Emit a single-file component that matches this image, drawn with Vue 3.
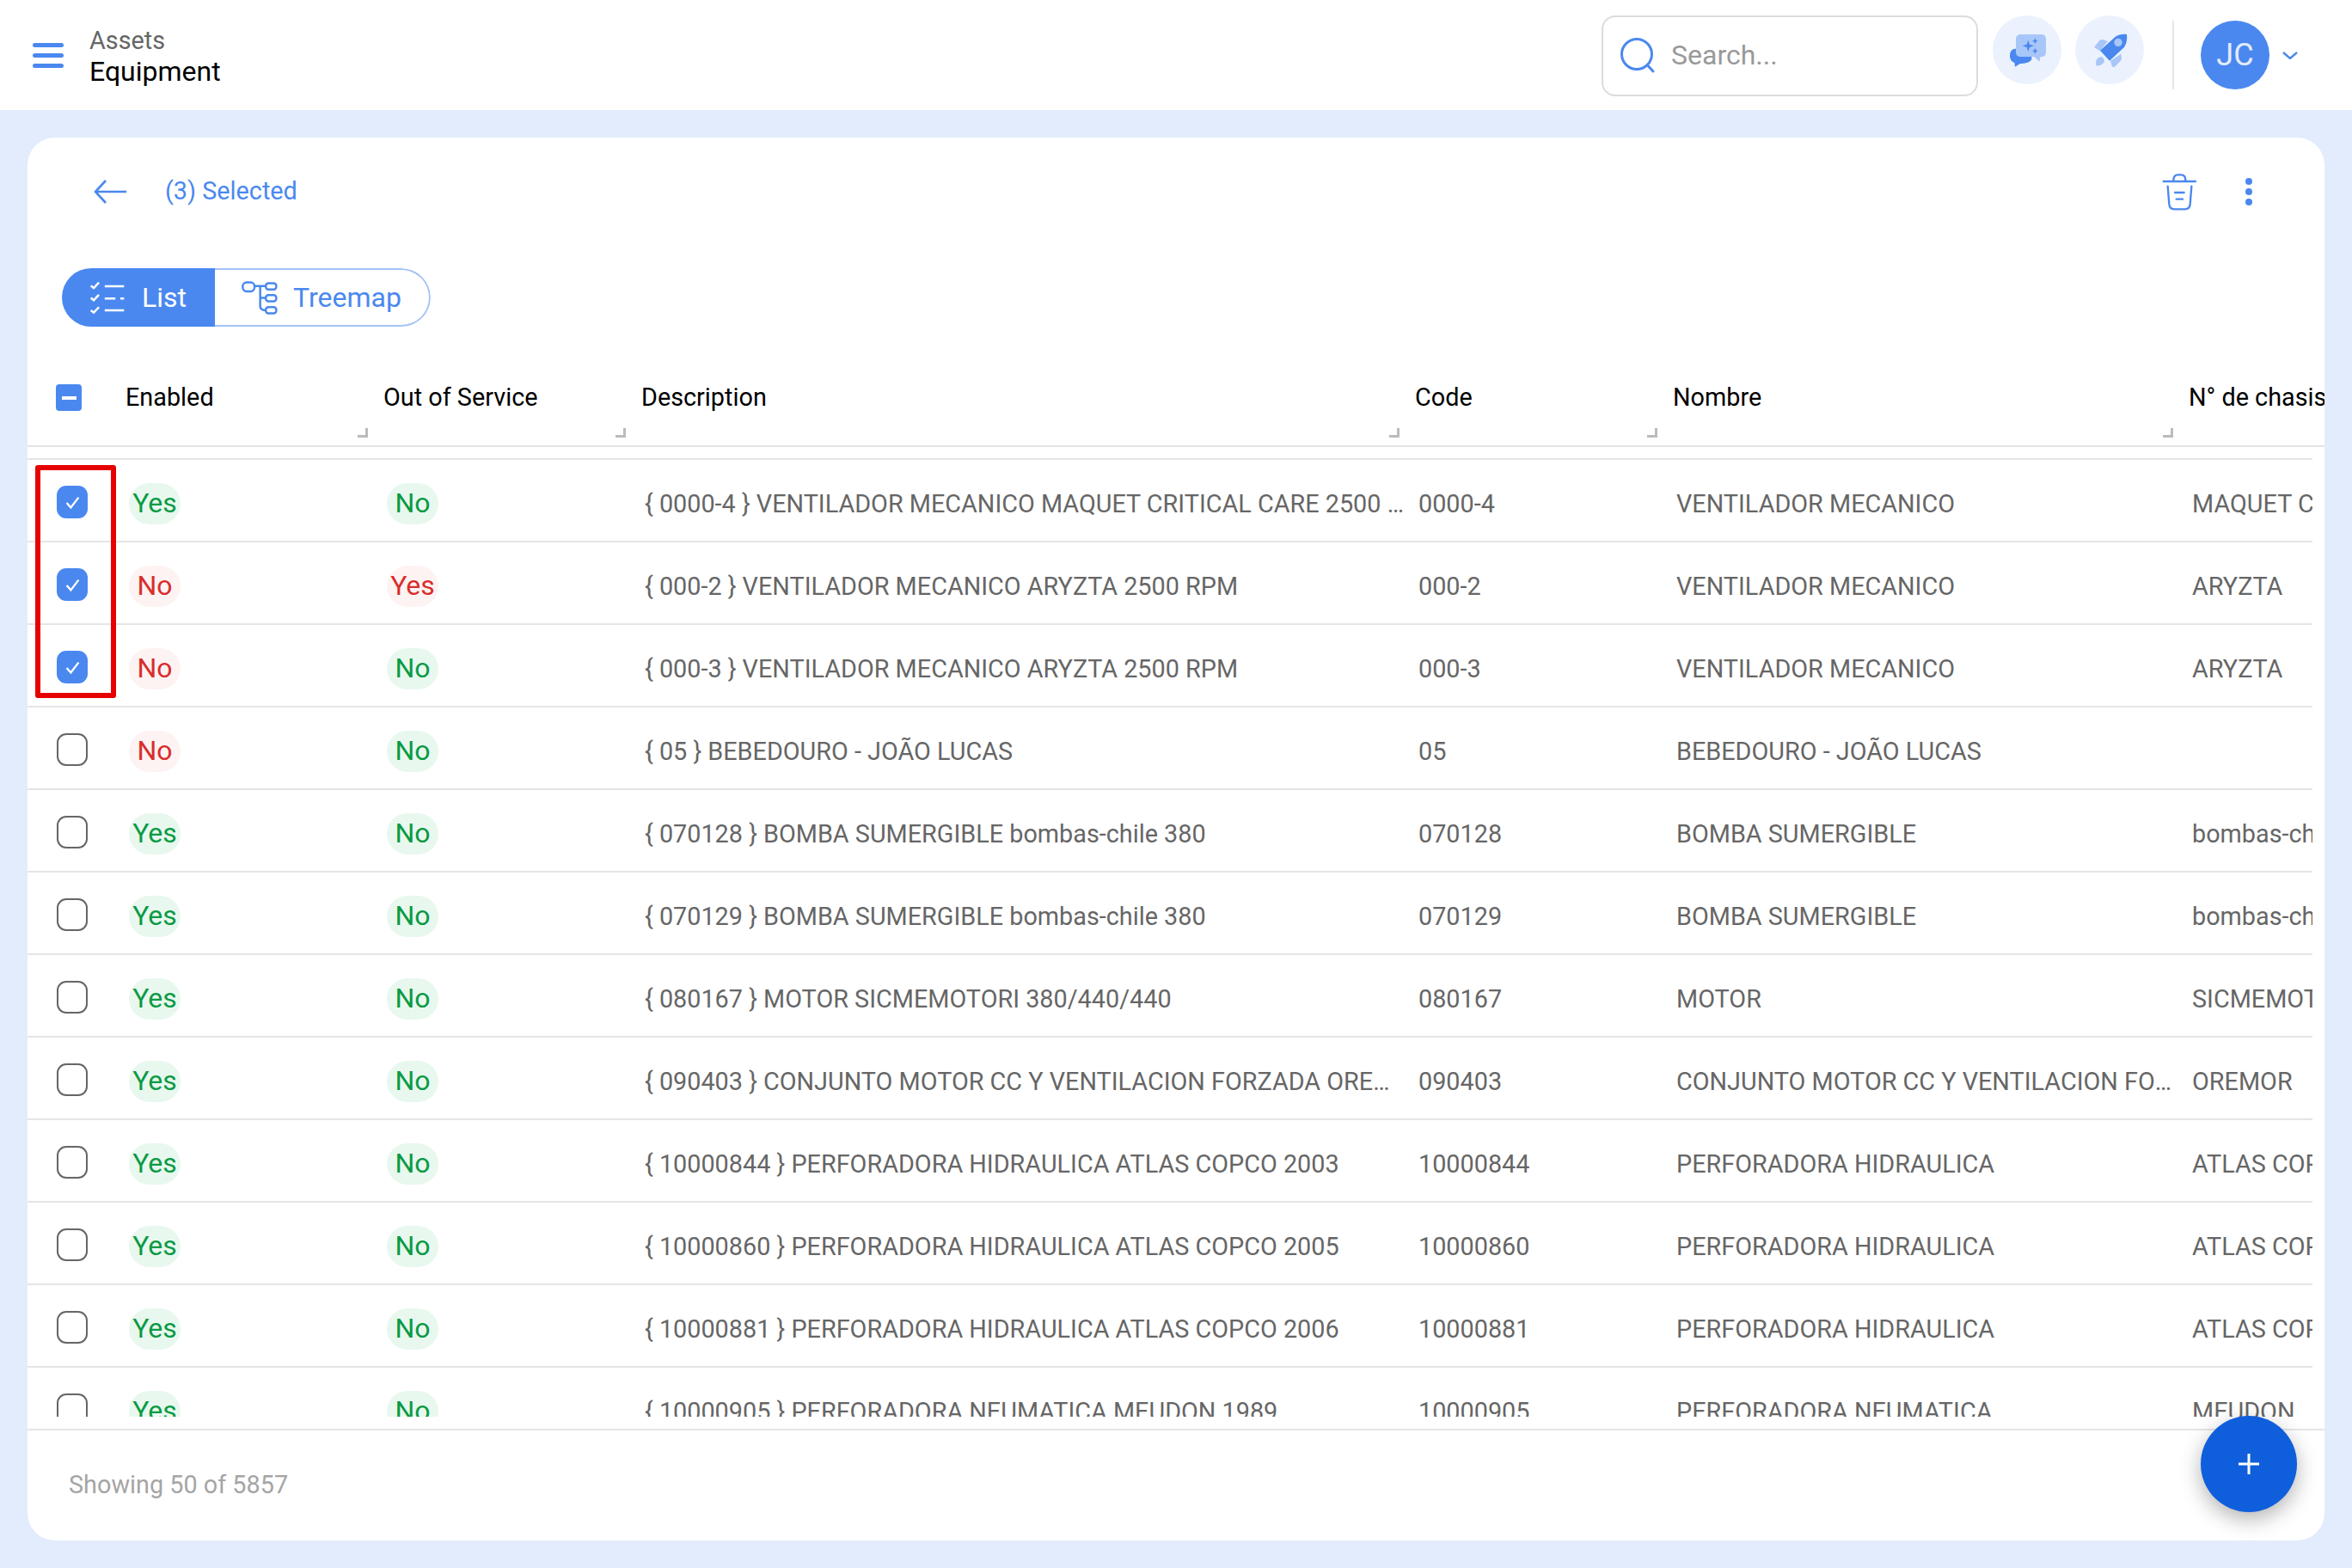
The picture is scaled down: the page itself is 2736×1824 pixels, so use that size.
<template>
  <div class="page">
    <header class="topbar">
      <div class="crumbs-wrap">
        <button class="burger"><span></span><span></span><span></span></button>
        <div class="crumbs">
          <div class="crumb-parent">Assets</div>
          <div class="crumb-title">Equipment</div>
        </div>
      </div>
      <div class="top-actions">
        <div class="search">
          <svg class="search-icon" viewBox="0 0 44 44" fill="none" stroke="#4a88ef" stroke-width="3">
            <circle cx="20" cy="20" r="17.5" />
            <path d="M33.5 34 L39 40" stroke-linecap="round" />
          </svg>
          <span class="search-text">Search...</span>
        </div>
        <button class="round-btn">
          <svg viewBox="-6 -6 240 240" width="80" height="80">
            <path d="M78 110 H72 C60 110 54 122 54 134 C54 146 60 156 70 158 L72 173 L90 162 C105 162 122 160 130 148 L130 120 Z" fill="#4a88ef" />
            <path d="M92 60 H164 C174 60 180 66 180 76 V122 C180 132 174 138 164 138 H160 L158 155 L138 138 H92 C82 138 75 132 75 122 V76 C75 66 82 60 92 60 Z" fill="#a9c6f8" />
            <path d="M118 80 L123 95 L138 100 L123 105 L118 120 L113 105 L98 100 L113 95 Z" fill="#4a88ef" />
            <path d="M142 72 L145 80 L152 83 L145 86 L142 94 L139 86 L132 83 L139 80 Z" fill="#4a88ef" />
            <path d="M142 107 L145 115 L152 118 L145 121 L142 129 L139 121 L132 118 L139 115 Z" fill="#4a88ef" />
          </svg>
        </button>
        <button class="round-btn">
          <svg viewBox="282 -6 240 240" width="80" height="80">
            <path d="M348 105 L366 82 C370 78 374 77 378 78 L396 84 L368 118 Z" fill="#a9c6f8" />
            <path d="M442 128 L444 142 C444 146 442 150 440 153 L420 173 C416 176 412 174 410 170 L405 152 Z" fill="#a9c6f8" />
            <path d="M356 170 C350 152 358 140 374 138 C392 150 384 168 356 170 Z" fill="#a9c6f8" />
            <path d="M369 116 L422 68 C432 61 448 58 462 60 C464 74 462 92 452 106 L402 152 Z" fill="#4a88ef" />
            <circle cx="432" cy="88" r="14" fill="#a9c6f8" />
          </svg>
        </button>
        <div class="top-divider"></div>
        <div class="avatar">JC</div>
        <svg class="chevron" viewBox="0 0 18 9" fill="none" stroke="#4a88ef" stroke-width="2.4">
          <path d="M1 1 L9 8 L17 1" />
        </svg>
      </div>
    </header>

    <main class="content">
      <section class="card">
        <div class="toolbar">
          <div class="toolbar-left">
            <svg class="back-arrow" viewBox="0 0 38 28" fill="none" stroke="#4a88ef" stroke-width="2.6">
              <path d="M38 14 H2 M14 1 L2 14 L14 27" />
            </svg>
            <span class="selected-text">(3) Selected</span>
          </div>
          <div class="toolbar-right">
            <svg class="trash" viewBox="45 35 120 135" fill="none" stroke="#4a88ef" stroke-width="7" stroke-linecap="round">
              <path d="M50 65 H162" />
              <path d="M85 62 C85 48 90 42 100 42 H112 C122 42 127 48 127 62" />
              <path d="M65 82 L70 145 C71 156 78 162 88 162 H125 C135 162 142 156 143 145 L148 82" />
              <path d="M90 104 H122 M95 127 H117" />
            </svg>
            <div class="kebab"><span></span><span></span><span></span></div>
          </div>
        </div>

        <div class="view-toggle">
          <button class="toggle-item active">
            <svg class="toggle-icon" viewBox="40 50 125 120" fill="none" stroke="#fff" stroke-width="7.5">
              <path d="M45 68 L55 76 L73 57 M45 110 L55 118 L73 99 M45 153 L55 161 L73 142" />
              <path d="M93 70 H160 M93 112 H130 M147 112 H160 M93 153 H160" />
            </svg>
            List
          </button>
          <button class="toggle-item">
            <svg class="toggle-icon" viewBox="574 48 128 124" fill="none" stroke="#4a88ef" stroke-width="7.5">
              <rect x="578" y="55" width="42" height="32" rx="14" />
              <rect x="660" y="58" width="37" height="22" rx="9" />
              <rect x="660" y="100" width="37" height="22" rx="9" />
              <rect x="660" y="143" width="37" height="22" rx="9" />
              <path d="M620 68 H660 M640 68 V140 C640 150 648 154 660 154 M640 110 H660" />
            </svg>
            Treemap
          </button>
        </div>

        <div class="table-head">
          <div class="head-check"><span class="check-partial"></span></div>
          <div v-for="col in columns" :key="col" class="head-cell">
            {{ col }}
          </div>
        </div>

        <div class="table-body">
          <div v-for="row in rows" :key="row.code" class="row">
            <div class="check-cell">
              <span class="check" :class="{ checked: row.checked }">
                <svg v-if="row.checked" viewBox="0 0 16 16" width="17" height="17" fill="none" stroke="#fff" stroke-width="2.2">
                  <path d="M1.5 8.5 L6 13.5 L14.5 2.5" />
                </svg>
              </span>
            </div>
            <div class="cell"><span class="pill" :class="row.enabled ? 'good' : 'bad'">{{ row.enabled ? 'Yes' : 'No' }}</span></div>
            <div class="cell"><span class="pill" :class="row.out ? 'bad' : 'good'">{{ row.out ? 'Yes' : 'No' }}</span></div>
            <div class="cell text">{{ row.description }}</div>
            <div class="cell text">{{ row.code }}</div>
            <div class="cell text">{{ row.name }}</div>
            <div class="cell text clip">{{ row.chassis }}</div>
          </div>
          <div class="mark-box"></div>
        </div>

        <footer class="card-footer">Showing 50 of 5857</footer>
        <button class="fab">
          <svg viewBox="0 0 26 26" width="26" height="26" stroke="#fff" stroke-width="3">
            <path d="M13 1 V25 M1 13 H25" />
          </svg>
        </button>
      </section>
    </main>
  </div>
</template>

<script setup>
const columns = ['Enabled', 'Out of Service', 'Description', 'Code', 'Nombre', 'N° de chasis']

const rows = [
  { checked: true, enabled: true, out: false, description: '{ 0000-4 } VENTILADOR MECANICO MAQUET CRITICAL CARE 2500 RPM', code: '0000-4', name: 'VENTILADOR MECANICO', chassis: 'MAQUET CRITICAL CARE' },
  { checked: true, enabled: false, out: true, description: '{ 000-2 } VENTILADOR MECANICO ARYZTA 2500 RPM', code: '000-2', name: 'VENTILADOR MECANICO', chassis: 'ARYZTA' },
  { checked: true, enabled: false, out: false, description: '{ 000-3 } VENTILADOR MECANICO ARYZTA 2500 RPM', code: '000-3', name: 'VENTILADOR MECANICO', chassis: 'ARYZTA' },
  { checked: false, enabled: false, out: false, description: '{ 05 } BEBEDOURO - JOÃO LUCAS', code: '05', name: 'BEBEDOURO - JOÃO LUCAS', chassis: '' },
  { checked: false, enabled: true, out: false, description: '{ 070128 } BOMBA SUMERGIBLE bombas-chile 380', code: '070128', name: 'BOMBA SUMERGIBLE', chassis: 'bombas-chile' },
  { checked: false, enabled: true, out: false, description: '{ 070129 } BOMBA SUMERGIBLE bombas-chile 380', code: '070129', name: 'BOMBA SUMERGIBLE', chassis: 'bombas-chile' },
  { checked: false, enabled: true, out: false, description: '{ 080167 } MOTOR SICMEMOTORI 380/440/440', code: '080167', name: 'MOTOR', chassis: 'SICMEMOTORI' },
  { checked: false, enabled: true, out: false, description: '{ 090403 } CONJUNTO MOTOR CC Y VENTILACION FORZADA OREMOR 220', code: '090403', name: 'CONJUNTO MOTOR CC Y VENTILACION FORZADA', chassis: 'OREMOR' },
  { checked: false, enabled: true, out: false, description: '{ 10000844 } PERFORADORA HIDRAULICA ATLAS COPCO 2003', code: '10000844', name: 'PERFORADORA HIDRAULICA', chassis: 'ATLAS COPCO' },
  { checked: false, enabled: true, out: false, description: '{ 10000860 } PERFORADORA HIDRAULICA ATLAS COPCO 2005', code: '10000860', name: 'PERFORADORA HIDRAULICA', chassis: 'ATLAS COPCO' },
  { checked: false, enabled: true, out: false, description: '{ 10000881 } PERFORADORA HIDRAULICA ATLAS COPCO 2006', code: '10000881', name: 'PERFORADORA HIDRAULICA', chassis: 'ATLAS COPCO' },
  { checked: false, enabled: true, out: false, description: '{ 10000905 } PERFORADORA NEUMATICA MEUDON 1989', code: '10000905', name: 'PERFORADORA NEUMATICA', chassis: 'MEUDON' }
]
</script>

<style scoped>
.page {
  height: 1824px;
  overflow: hidden;
  display: flex;
  flex-direction: column;
  background: #e2ecfd;
  font-family: Roboto, "Liberation Sans", sans-serif;
}
button {
  border: none;
  background: none;
  padding: 0;
  font-family: inherit;
}
.topbar {
  flex: none;
  height: 128px;
  background: #fff;
  display: flex;
  align-items: center;
  justify-content: space-between;
  padding: 0 63px 0 38px;
}
.crumbs-wrap {
  display: flex;
  align-items: center;
  gap: 30px;
}
.burger {
  width: 36px;
  display: flex;
  flex-direction: column;
  gap: 7px;
}
.burger span {
  display: block;
  height: 5px;
  border-radius: 3px;
  background: #4a88ef;
}
.crumbs {
  padding-top: 1px;
}
.crumb-parent {
  font-size: 28.8px;
  line-height: 36px;
  color: #666;
}
.crumb-title {
  font-size: 32px;
  line-height: 36px;
  color: #000;
}
.top-actions {
  display: flex;
  align-items: center;
}
.search {
  width: 438px;
  height: 94px;
  box-sizing: border-box;
  margin-top: 2px;
  margin-right: 17px;
  border: 2px solid #dcdcdc;
  border-radius: 16px;
  display: flex;
  align-items: center;
  padding-left: 19px;
}
.search-icon {
  width: 44px;
  height: 44px;
  margin-right: 16px;
}
.search-text {
  font-size: 32px;
  color: #999;
  margin-top: -3px;
}
.round-btn {
  width: 80px;
  height: 80px;
  border-radius: 50%;
  background: #ebf2fe;
  margin-right: 16px;
  margin-bottom: 12px;
}
.round-btn svg {
  display: block;
}
.top-divider {
  width: 2px;
  height: 80px;
  background: #e5e5e5;
  margin-left: 17px;
  margin-right: 31px;
}
.avatar {
  width: 80px;
  height: 80px;
  border-radius: 50%;
  background: #4a88ef;
  color: #e2ecfd;
  font-size: 36px;
  display: flex;
  align-items: center;
  justify-content: center;
}
.chevron {
  width: 18px;
  height: 9px;
  margin-left: 15px;
  margin-top: 1px;
}
.content {
  flex: 1;
  min-height: 0;
  display: flex;
  padding: 32px;
}
.card {
  flex: 1;
  min-width: 0;
  position: relative;
  background: #fff;
  border-radius: 32px;
  display: flex;
  flex-direction: column;
}
.toolbar {
  height: 126px;
  flex: none;
  display: flex;
  align-items: center;
  justify-content: space-between;
  padding: 0 84px 0 77px;
}
.toolbar-left {
  display: flex;
  align-items: center;
  gap: 45px;
}
.back-arrow {
  width: 38px;
  height: 28px;
}
.selected-text {
  font-size: 28.8px;
  color: #4a88ef;
  margin-top: -3px;
}
.toolbar-right {
  display: flex;
  align-items: center;
  gap: 57px;
}
.trash {
  width: 40px;
  height: 45px;
}
.kebab {
  display: flex;
  flex-direction: column;
  gap: 4px;
}
.kebab span {
  width: 8px;
  height: 8px;
  border-radius: 50%;
  background: #4a88ef;
}
.view-toggle {
  flex: none;
  align-self: flex-start;
  margin: 26px 0 0 40px;
  height: 68px;
  display: flex;
  border-radius: 34px;
  overflow: hidden;
}
.toggle-item {
  display: flex;
  align-items: center;
  gap: 18px;
  box-sizing: border-box;
  width: 251px;
  padding-left: 31px;
  font-size: 32px;
  color: #4a88ef;
  border: 2px solid #a3c2f6;
  border-left: none;
  border-radius: 0 34px 34px 0;
}
.toggle-item.active {
  width: 178px;
  background: #4a88ef;
  color: #fff;
  border: none;
  border-radius: 0;
  padding-left: 32px;
  gap: 19px;
}
.toggle-icon {
  width: 42px;
  height: 41px;
}
.table-head,
.row {
  display: grid;
  grid-template-columns: 100px 300px 300px 900px 300px 600px minmax(0, 1fr);
}
.table-head {
  flex: none;
  height: 140px;
  box-sizing: border-box;
  border-bottom: 2px solid #e5e5e5;
}
.head-check {
  padding: 67px 0 0 33px;
}
.check-partial {
  display: flex;
  align-items: center;
  justify-content: center;
  width: 30px;
  height: 31px;
  border-radius: 4px;
  background: #4a88ef;
}
.check-partial::before {
  content: "";
  width: 17px;
  height: 4px;
  background: #fff;
}
.head-cell {
  position: relative;
  padding: 65px 0 0 14px;
  font-size: 28.8px;
  line-height: 34px;
  color: #000;
  white-space: nowrap;
  overflow: hidden;
}
.head-cell::after {
  content: "";
  position: absolute;
  right: 4px;
  top: 118px;
  width: 9px;
  height: 8px;
  border-right: 3px solid #bbb;
  border-bottom: 3px solid #bbb;
}
.head-cell:last-child::after {
  display: none;
}
.table-body {
  flex: 1;
  min-height: 0;
  position: relative;
  overflow: hidden;
  margin: 0 14px 14px 0;
  padding-top: 13px;
}
.row {
  grid-template-columns: 104px 300px 300px 900px 300px 600px minmax(0, 1fr);
  height: 96px;
  box-sizing: border-box;
  border-top: 2px solid #e5e5e5;
  align-items: center;
}
.check-cell {
  padding-left: 34px;
  display: flex;
  padding-top: 4px;
}
.check {
  width: 36px;
  height: 38px;
  box-sizing: border-box;
  border: 2px solid #666;
  border-radius: 11px;
  display: flex;
  align-items: center;
  justify-content: center;
}
.check.checked {
  border: none;
  background: #4a88ef;
}
.cell {
  padding-left: 14px;
  min-width: 0;
  font-size: 28.8px;
  line-height: 48px;
  color: #666;
  padding-top: 7px;
}
.text {
  white-space: nowrap;
  overflow: hidden;
  text-overflow: ellipsis;
}
.clip {
  text-overflow: clip;
}
.pill {
  display: block;
  width: 60px;
  height: 48px;
  border-radius: 24px;
  font-size: 32px;
  line-height: 46px;
  text-align: center;
  white-space: nowrap;
}
.pill.good {
  background: #e8f8ee;
  color: #0a9a44;
}
.pill.bad {
  background: #fdf3f2;
  color: #d92d2d;
}
.mark-box {
  position: absolute;
  left: 9px;
  top: 21px;
  width: 94px;
  height: 271px;
  box-sizing: border-box;
  border: 6px solid #e60000;
  border-radius: 3px;
}
.card-footer {
  flex: none;
  height: 130px;
  box-sizing: border-box;
  border-top: 2px solid #e5e5e5;
  padding: 0 0 2px 48px;
  display: flex;
  align-items: center;
  font-size: 28.8px;
  color: #a5a5a5;
}
.fab {
  position: absolute;
  right: 32px;
  bottom: 33px;
  width: 112px;
  height: 112px;
  border-radius: 50%;
  background: #0f5fdc;
  box-shadow: 0 8px 24px rgba(0, 0, 0, 0.3);
  display: flex;
  align-items: center;
  justify-content: center;
}
</style>

<style>
html,
body {
  margin: 0;
  background: #e2ecfd;
}
</style>
